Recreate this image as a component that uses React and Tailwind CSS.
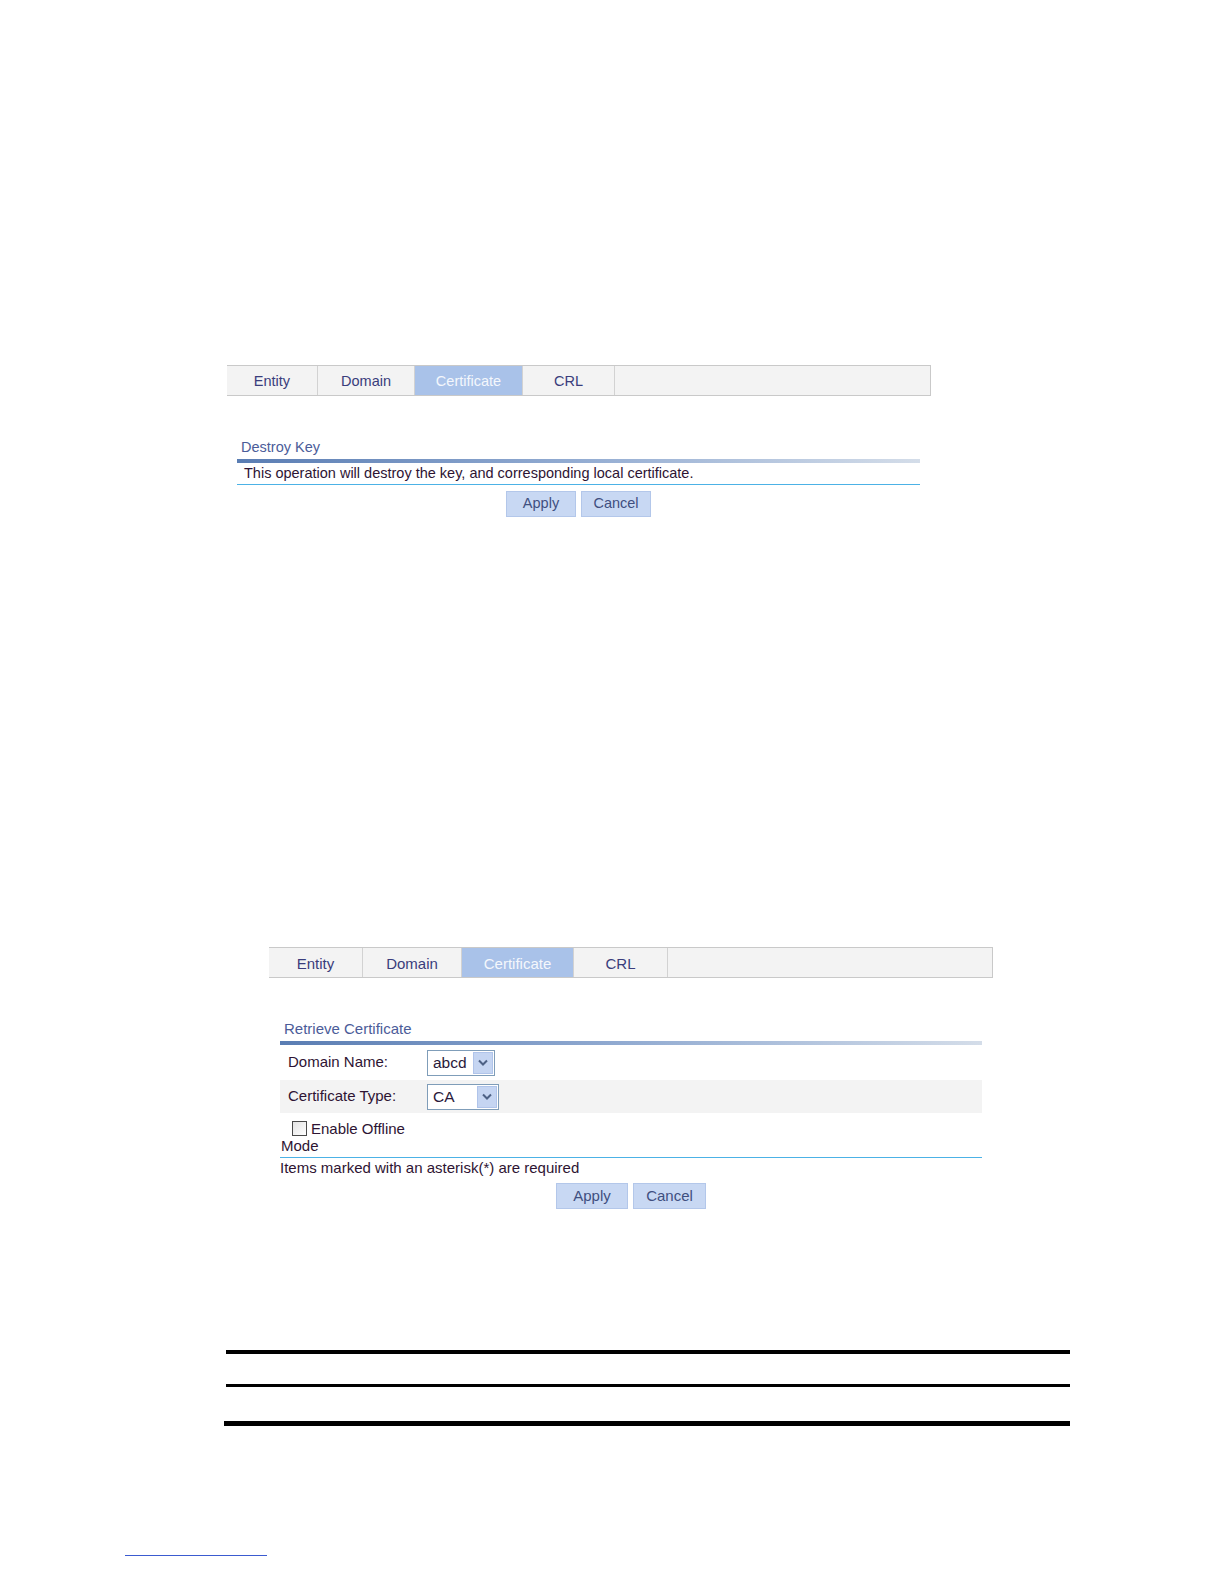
import React from 'react'

const font = { fontFamily: '"Liberation Sans", Arial, sans-serif' }

function Tabs({ widths, size }) {
  const names = ['Entity', 'Domain', 'Certificate', 'CRL']
  return (
    <div className="flex h-[31px] border-y border-[#c9c9c9] bg-[#f3f3f3]">
      {names.map((n, i) => (
        <div
          key={n}
          className={
            'flex items-center justify-center border-r border-[#d2d2d2] ' +
            size +
            (n === 'Certificate' ? ' bg-[#a9c2e9] text-[#f4f7fc]' : ' text-[#3a3d7c]')
          }
          style={{ width: widths[i] }}
        >
          <span className="pt-[3px]">{n}</span>
        </div>
      ))}
      <div className="flex-1 border-r border-[#c9c9c9]" />
    </div>
  )
}

function Title({ children, size }) {
  return (
    <div>
      <div className={'text-[#4b5c99] pl-[4px] leading-[18px] ' + size}>{children}</div>
      <div className="h-[4px] mt-[3px] bg-gradient-to-r from-[#5a7db3] via-[#93acd2] to-[#d4dde9]" />
    </div>
  )
}

function Select({ value, width }) {
  return (
    <div className="flex items-center h-[26px] border border-[#7f9db9] bg-white" style={{ width }}>
      <span className="flex-1 pl-[5px] text-[15.5px] text-[#2a1a3a]">{value}</span>
      <span className="w-[20px] h-[22px] mr-[1px] flex items-center justify-center bg-[#c5d5f2] border border-[#b0c4ea]">
        <svg width="10" height="7" viewBox="0 0 10 7">
          <path d="M1 1.5 L5 5.5 L9 1.5" fill="none" stroke="#4d6185" strokeWidth="2" />
        </svg>
      </span>
    </div>
  )
}

export default function App() {
  return (
    <div className="w-full bg-white" style={font}>
      <div className="pt-[365px] pl-[227px] w-[931px]">
        <Tabs widths={[91, 97, 108, 92]} size="text-[14.5px]" />
      </div>

      <div className="pt-[42px] pl-[237px] w-[920px]">
        <Title size="text-[14.5px]">Destroy Key</Title>
        <div className="h-[22px] border-b border-[#4cb2e6] flex items-center pl-[7px] text-[14.5px] text-[#2e1433]">
          This operation will destroy the key, and corresponding local certificate.
        </div>
        <div className="pt-[6px] pl-[269px] flex gap-[5px]">
          <button className="w-[70px] h-[26px] bg-[#c8d8f3] border border-[#b3c7ea] text-[14.5px] text-[#3f4f80]">Apply</button>
          <button className="w-[70px] h-[26px] bg-[#c8d8f3] border border-[#b3c7ea] text-[14.5px] text-[#3f4f80]">Cancel</button>
        </div>
      </div>

      <div className="pt-[430px] pl-[269px] w-[993px]">
        <Tabs widths={[94, 99, 112, 94]} size="text-[15px]" />
      </div>

      <div className="pt-[42px] pl-[280px] w-[982px]">
        <Title size="text-[15px]">Retrieve Certificate</Title>
        <div className="flex items-center h-[35px]">
          <span className="w-[147px] pl-[8px] text-[15px] text-[#2e1433]">Domain Name:</span>
          <Select value="abcd" width={68} />
        </div>
        <div className="flex items-center h-[33px] bg-[#f3f3f3]">
          <span className="w-[147px] pl-[8px] text-[15px] text-[#2e1433]">Certificate Type:</span>
          <Select value="CA" width={72} />
        </div>
        <div className="border-b border-[#4cb2e6] pb-[2px]">
          <div className="flex items-center pl-[12px] pt-[7px] h-[24px]">
            <span className="w-[15px] h-[15px] border border-[#4a4a4a] bg-gradient-to-br from-[#e4e4e4] to-white mr-[4px]" />
            <span className="text-[15px] text-[#2e1433] mt-[2px]">Enable Offline</span>
          </div>
          <div className="pl-[1px] text-[15px] text-[#2e1433] leading-[18px]">Mode</div>
        </div>
        <div className="text-[15px] text-[#2e1433] leading-[20px]">Items marked with an asterisk(*) are required</div>
        <div className="pt-[5px] pl-[276px] flex gap-[5px]">
          <button className="w-[72px] h-[26px] bg-[#c8d8f3] border border-[#b3c7ea] text-[15px] text-[#3f4f80]">Apply</button>
          <button className="w-[73px] h-[26px] bg-[#c8d8f3] border border-[#b3c7ea] text-[15px] text-[#3f4f80]">Cancel</button>
        </div>
      </div>

      <div className="pt-[141px] pl-[226px] w-[1070px]">
        <div className="h-[4px] bg-black" />
        <div className="h-[30px]" />
        <div className="h-[3px] bg-black" />
        <div className="h-[34px]" />
        <div className="h-[5px] bg-black -ml-[2px]" />
      </div>

      <div className="pt-[129px] pl-[125px] pb-[10px]">
        <div className="w-[142px] h-px bg-[#3b5bd0]" />
      </div>
    </div>
  )
}
